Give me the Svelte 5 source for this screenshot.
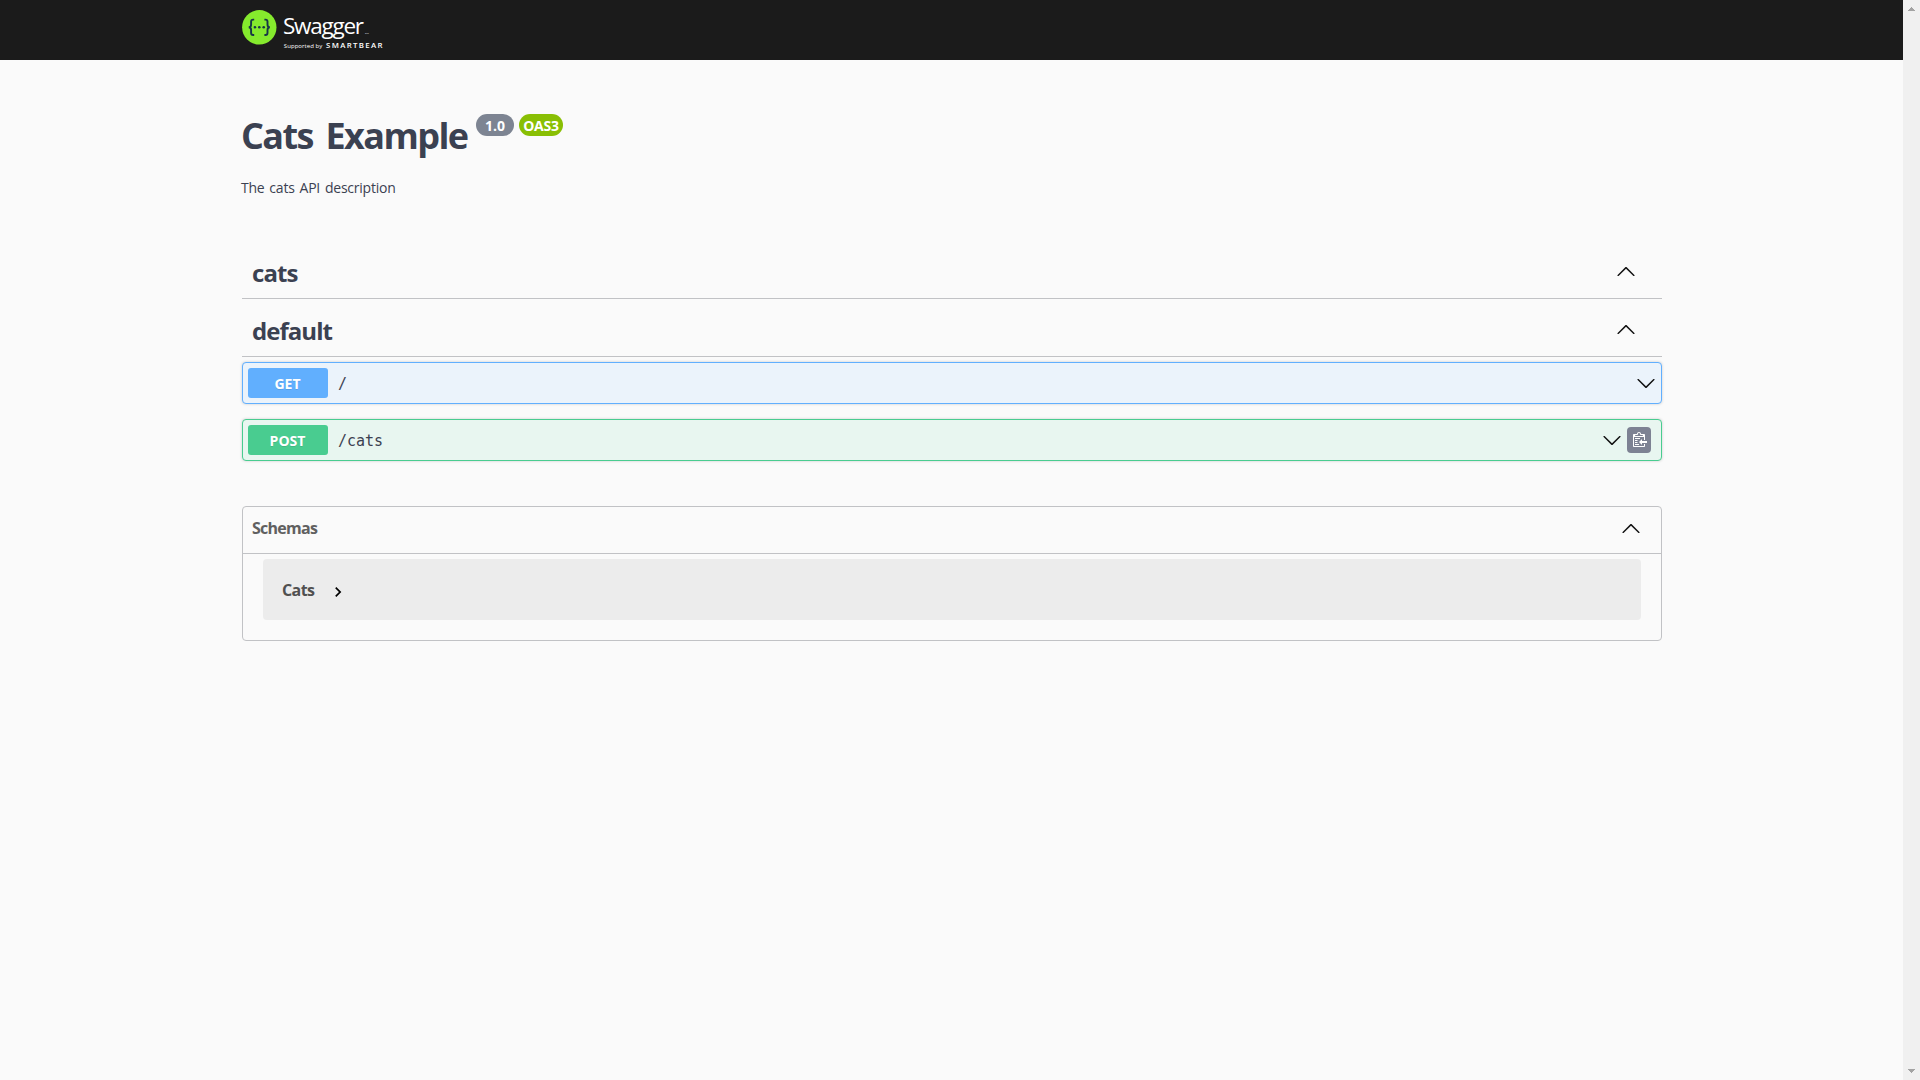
<script>
  const tags = ['cats', 'default'];
  const operations = [
    { method: 'GET', path: '/', kind: 'get', copy: false },
    { method: 'POST', path: '/cats', kind: 'post', copy: true }
  ];
</script>

{#snippet chevron(down)}
  <svg class="chevron" class:down viewBox="0 0 20 20" width="20" height="20">
    <path d="M17.418 14.908c.272.268.709.268.979 0s.271-.701 0-.969l-7.908-7.83c-.27-.268-.707-.268-.979 0l-7.908 7.83c-.27.268-.27.701 0 .969.271.268.709.268.979 0L10 7.767l7.418 7.141Z" />
  </svg>
{/snippet}

<div class="page">
  <div class="content">
    <header class="topbar">
      <svg class="logo" width="150" height="60" viewBox="0 0 150 60">
        <circle cx="18.3" cy="27.3" r="17.2" fill="#85ea2d" />
        <g fill="none" stroke="#173647" stroke-width="1.9">
          <path d="M13.2 19.6h-1.1q-2 0-2 2v2.9q0 2.8-2.4 2.8 2.4 0 2.4 2.8V33q0 2 2 2h1.1" />
          <path d="M23.4 19.6h1.1q2 0 2 2v2.9q0 2.8 2.4 2.8-2.4 0-2.4 2.8V33q0 2-2 2h-1.1" />
        </g>
        <g fill="#173647">
          <circle cx="13.9" cy="27.3" r="1.3" />
          <circle cx="18.3" cy="27.3" r="1.3" />
          <circle cx="22.7" cy="27.3" r="1.3" />
        </g>
        <g fill="#fff" font-family="Open Sans, sans-serif">
          <text class="brand" x="42" y="34.3" textLength="81">Swagger</text>
          <text x="124" y="34" font-size="2.5">TM</text>
          <text x="42.8" y="48.4" font-size="6" textLength="38.5">Supported by</text>
          <text x="85" y="48.4" font-size="7.8" font-weight="600" textLength="56.5">SMARTBEAR</text>
        </g>
      </svg>
    </header>

    <section class="info">
      <div class="title">
        <h1>Cats Example</h1>
        <span class="badge version">1.0</span>
        <span class="badge oas">OAS3</span>
      </div>
      <p>The cats API description</p>
    </section>

    {#each tags as tag}
      <div class="tag {tag}">
        <h2>{tag}</h2>
        {@render chevron(false)}
      </div>
    {/each}

    <div class="operations">
      {#each operations as op}
        <div class="op {op.kind}">
          <span class="method">{op.method}</span>
          <span class="path">{op.path}</span>
          {@render chevron(true)}
          {#if op.copy}
            <button aria-label="Copy to clipboard">
              <svg width="15" height="16" viewBox="0 0 15 16">
                <path fill="#fff" d="M2 13h4v1H2v-1zm5-6H2v1h5V7zm2 3V8l-3 3 3 3v-2h5v-2H9zM4.5 9H2v1h2.5V9zM2 12h2.5v-1H2v1zm9 1h1v2c-.02.28-.11.52-.3.7-.19.18-.42.28-.7.3H1c-.55 0-1-.45-1-1V4c0-.55.45-1 1-1h3c0-1.11.89-2 2-2 1.11 0 2 .89 2 2h3c.55 0 1 .45 1 1v5h-1V6H1v9h10v-2zM2 5h8c0-.55-.45-1-1-1H8c-.55 0-1-.45-1-1s-.45-1-1-1-1 .45-1 1-.45 1-1 1H3c-.55 0-1 .45-1 1z" />
              </svg>
            </button>
          {/if}
        </div>
      {/each}
    </div>

    <section class="schemas">
      <div class="schemas-head">
        <h3>Schemas</h3>
        {@render chevron(false)}
      </div>
      <div class="model">
        <span>Cats</span>
        <svg width="20" height="20" viewBox="0 0 24 24"><path d="M10 6 8.59 7.41 13.17 12l-4.58 4.59L10 18l6-6z" /></svg>
      </div>
    </section>
  </div>
  <div class="scrollbar">
    <svg width="7" height="4" viewBox="0 0 7 4" shape-rendering="crispEdges"><path d="M3 0h1v1h1v1h1v1h1v1H0V3h1V2h1V1h1z" /></svg>
    <svg width="7" height="4" viewBox="0 0 7 4" shape-rendering="crispEdges"><path d="M0 0h7v1H6v1H5v1H4v1H3V3H2V2H1V1H0z" /></svg>
  </div>
</div>

<style>
  :global(body) { margin: 0; background: #fafafa; }
  * { box-sizing: border-box; }
  h1, h2, h3, p { margin: 0; white-space: nowrap; }
  .page {
    display: flex;
    width: 1920px;
    height: 1080px;
    overflow: hidden;
    background: linear-gradient(#1b1b1b 60px, #fafafa 60px);
    color: #3b4151;
    font-family: "Open Sans", sans-serif;
  }
  .content { width: 1903px; padding: 0 241px 0 242px; }
  .topbar { height: 60px; }
  .logo { display: block; margin-left: -1px; }
  .brand { font-size: 22.5px; font-weight: 400; }
  .info { height: 181px; padding-top: 54px; }
  .title { display: flex; height: 60px; }
  h1 { width: 235px; margin-left: -1px; font-size: 36px; font-weight: 700; line-height: 44px; letter-spacing: -1.6px; word-spacing: 5px; }
  .badge {
    height: 22px;
    margin-right: 5px;
    border-radius: 11px;
    color: #fff;
    font-size: 14px;
    font-weight: 700;
    line-height: 24px;
    text-align: center;
  }
  .version { width: 38px; background: #7d8492; }
  .oas { width: 44px; background: #89bf04; letter-spacing: -.2px; }
  .info p { margin: 4px 0 0 -1px; font-size: 14px; line-height: 20px; letter-spacing: -.23px; word-spacing: 1.5px; }
  .tag {
    display: flex;
    justify-content: space-between;
    height: 58px;
    padding: 20px 26px 0 10px;
    border-bottom: 1px solid #c1c2c5;
  }
  h2 { font-size: 24px; font-weight: 700; line-height: 24px; letter-spacing: -.95px; }
  .chevron { display: block; flex: none; fill: #111; }
  .down { margin-top: 2px; transform: scaleY(-1); }
  .operations { display: flex; flex-direction: column; gap: 15px; margin-top: 5px; }
  .op {
    display: flex;
    align-items: center;
    height: 42px;
    padding: 0 5px;
    border: 1px solid;
    border-radius: 4px;
    box-shadow: 0 0 3px rgba(0, 0, 0, .19);
  }
  .get { border-color: #61affe; background: #ebf3fb; }
  .post { border-color: #49cc90; background: #e8f6f0; }
  .method {
    width: 80px;
    height: 30px;
    padding-right: 1px;
    border-radius: 3px;
    color: #fff;
    font-size: 14px;
    font-weight: 700;
    line-height: 32px;
    text-align: center;
    text-shadow: 0 1px 0 rgba(0, 0, 0, .1);
  }
  .get .method { background: #61affe; }
  .post .method { background: #49cc90; }
  .path { flex: 1; padding: 2px 0 0 10px; font: 15px/20px "DejaVu Sans Mono", monospace; }
  button {
    display: flex;
    justify-content: center;
    width: 24px;
    height: 26px;
    margin: 0 5px;
    padding: 4px 0 0 2px;
    border: 0;
    border-radius: 4px;
    background: #7d8293;
  }
  .schemas { height: 135px; margin-top: 45px; border: 1px solid #c1c2c5; border-radius: 4px; }
  .schemas-head {
    display: flex;
    justify-content: space-between;
    height: 47px;
    padding: 11px 20px 0 9px;
    border-bottom: 1px solid #c1c2c5;
    color: #606060;
  }
  h3 { font-size: 16px; font-weight: 700; line-height: 20px; letter-spacing: -.75px; }
  .model {
    display: flex;
    align-items: center;
    height: 61px;
    margin: 5px 20px 0;
    padding-left: 19px;
    border-radius: 4px;
    background: #ececec;
    color: #505050;
    font-size: 16px;
    font-weight: 700;
    letter-spacing: -.6px;
  }
  .model span { width: 34px; }
  .model svg { margin: 4px 0 0 12px; }
  .scrollbar {
    display: flex;
    flex-direction: column;
    align-items: center;
    justify-content: space-between;
    width: 17px;
    padding: 7px 0;
    background: #f0f0f0;
  }
  .scrollbar svg { fill: #a3a3a3; }
</style>
